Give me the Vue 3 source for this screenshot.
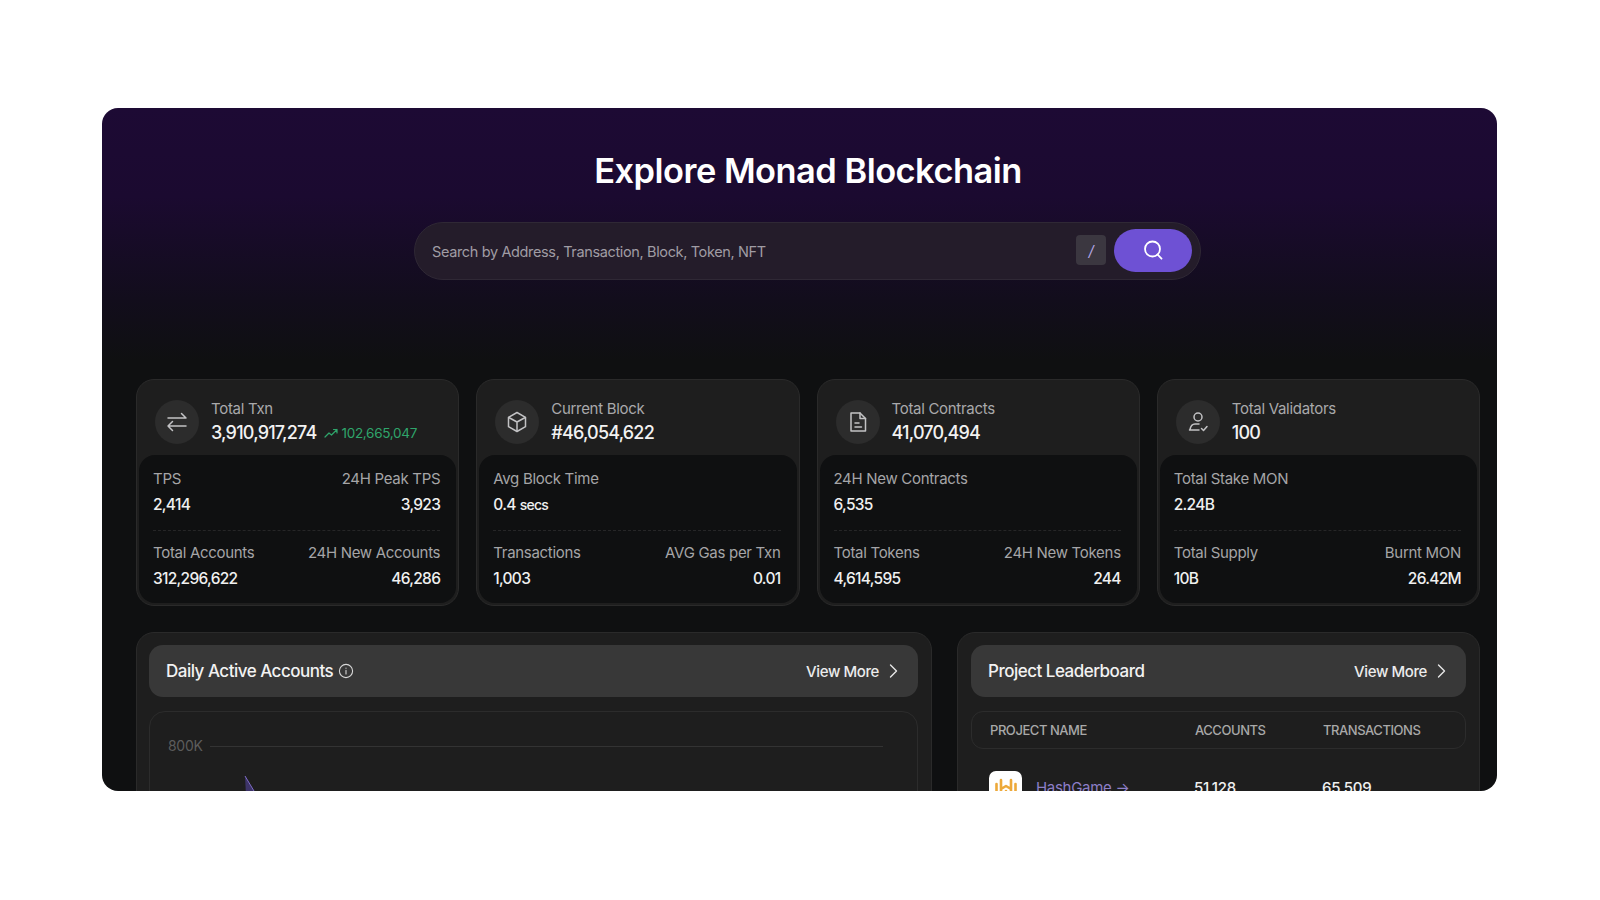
<template>
  <div class="page">
    <main class="explorer">
      <h1 class="title">Explore Monad Blockchain</h1>

      <div class="search">
        <span class="search__hint">Search by Address, Transaction, Block, Token, NFT</span>
        <span class="search__key">/</span>
        <button class="search__btn" type="button" aria-label="Search">
          <svg width="22" height="22" viewBox="0 0 22 22" fill="none" stroke="#fff" stroke-width="1.8" stroke-linecap="round">
            <circle cx="10.5" cy="10" r="7.5" />
            <path d="M15.5 15.5l4 4.2" />
          </svg>
        </button>
      </div>

      <section class="stats">
        <article v-for="card in cards" :key="card.title" class="stat-card">
          <header class="stat-card__head">
            <span class="stat-card__icon">
              <svg width="24" height="24" viewBox="0 0 24 24" fill="none" stroke="#c2c2c4" stroke-width="1.5" stroke-linecap="round" stroke-linejoin="round">
                <path v-for="d in card.icon" :key="d" :d="d" />
              </svg>
            </span>
            <div>
              <div class="stat-card__title">{{ card.title }}</div>
              <div class="stat-card__value">
                {{ card.value }}
                <span v-if="card.trend" class="trend">
                  <svg width="14" height="12" viewBox="0 0 14 12" fill="none" stroke="#2fa56b" stroke-width="1.2" stroke-linecap="round" stroke-linejoin="round">
                    <path d="M1 10l4-4 2.5 2L13 2.5M9.5 2.5H13V6" />
                  </svg>
                  {{ card.trend }}
                </span>
              </div>
            </div>
          </header>
          <div class="stat-card__body">
            <div v-for="(row, i) in card.rows" :key="i" class="metric-row">
              <div v-for="m in row" :key="m.label" class="metric">
                <div class="metric__label">{{ m.label }}</div>
                <div class="metric__value">{{ m.value }}<small v-if="m.unit">{{ m.unit }}</small></div>
              </div>
            </div>
          </div>
        </article>
      </section>

      <section class="lower">
        <article class="panel">
          <header class="panel__head">
            <h2 class="panel__title">
              Daily Active Accounts
              <svg width="16" height="16" viewBox="0 0 16 16" fill="none" stroke="#d8d8d8" stroke-width="1.1" stroke-linecap="round">
                <circle cx="8" cy="8" r="6.6" />
                <path d="M8 7.4v3.6M8 5v.2" />
              </svg>
            </h2>
            <a class="more">View More
              <svg width="16" height="16" viewBox="0 0 16 16" fill="none" stroke="#e6e6e6" stroke-width="1.4" stroke-linecap="round" stroke-linejoin="round"><path d="M5.5 2l6 6-6 6" /></svg>
            </a>
          </header>
          <div class="chart">
            <div class="chart__row">
              <span class="chart__tick">800K</span>
              <span class="chart__line"></span>
            </div>
            <svg class="chart__spike" width="14" height="20" viewBox="0 0 14 20">
              <path d="M1 0L13 20H2z" fill="#3d3468" />
              <path d="M1 0L13 20" stroke="#7d6cc4" stroke-width="1" fill="none" />
            </svg>
          </div>
        </article>

        <article class="panel">
          <header class="panel__head">
            <h2 class="panel__title">Project Leaderboard</h2>
            <a class="more">View More
              <svg width="16" height="16" viewBox="0 0 16 16" fill="none" stroke="#e6e6e6" stroke-width="1.4" stroke-linecap="round" stroke-linejoin="round"><path d="M5.5 2l6 6-6 6" /></svg>
            </a>
          </header>
          <div class="board board__head">
            <span>PROJECT NAME</span>
            <span>ACCOUNTS</span>
            <span>TRANSACTIONS</span>
          </div>
          <div class="board board__row">
            <span class="project">
              <span class="project__logo">
                <svg width="26" height="26" viewBox="0 0 26 26" fill="none" stroke="#eda93a" stroke-width="2.6" stroke-linecap="round" stroke-linejoin="round">
                  <path d="M3.5 9v11M8 5v17M18 5v17M22.5 9v11M8 14l5-3 5 3M13 16v6" />
                </svg>
              </span>
              <span class="project__name">HashGame →</span>
            </span>
            <span>51,128</span>
            <span>65,509</span>
          </div>
        </article>
      </section>
    </main>
  </div>
</template>

<script setup>
const cards = [
  {
    title: 'Total Txn',
    value: '3,910,917,274',
    trend: '102,665,047',
    icon: ['M3 8h18M16.5 3.5L21 8M3 16h18M7.5 11.5L3 16l4.5 4.5'],
    rows: [
      [{ label: 'TPS', value: '2,414' }, { label: '24H Peak TPS', value: '3,923' }],
      [{ label: 'Total Accounts', value: '312,296,622' }, { label: '24H New Accounts', value: '46,286' }],
    ],
  },
  {
    title: 'Current Block',
    value: '#46,054,622',
    icon: ['M12 2.5l8.5 4.8v9.4L12 21.5l-8.5-4.8V7.3z', 'M3.8 7.5L12 12l8.2-4.5M12 12v9.3'],
    rows: [
      [{ label: 'Avg Block Time', value: '0.4', unit: 'secs' }],
      [{ label: 'Transactions', value: '1,003' }, { label: 'AVG Gas per Txn', value: '0.01' }],
    ],
  },
  {
    title: 'Total Contracts',
    value: '41,070,494',
    icon: ['M5 3h9l5.5 5.5V21H5z', 'M14 3v5.5h5.5M9 13h4M9 17h6.5'],
    rows: [
      [{ label: '24H New Contracts', value: '6,535' }],
      [{ label: 'Total Tokens', value: '4,614,595' }, { label: '24H New Tokens', value: '244' }],
    ],
  },
  {
    title: 'Total Validators',
    value: '100',
    icon: ['M12 3a4 4 0 1 1 0 8 4 4 0 0 1 0-8z', 'M13 14H9c-2.5 0-4.3 1.7-5 5.5L3.5 20H13M15.5 18.5l2 2 3.5-4'],
    rows: [
      [{ label: 'Total Stake MON', value: '2.24B' }],
      [{ label: 'Total Supply', value: '10B' }, { label: 'Burnt MON', value: '26.42M' }],
    ],
  },
];
</script>

<style>
html,
body {
  background: #fff;
}
</style>

<style scoped>
.page {
  height: 900px;
  box-sizing: border-box;
  padding: 108px 103px 0 102px;
  overflow: hidden;
  font-family: Inter, "Liberation Sans", sans-serif;
  letter-spacing: -0.3px;
}

.explorer {
  height: 683px;
  box-sizing: border-box;
  padding: 42px 17px 0 34px;
  border-radius: 16px;
  overflow: hidden;
  background: linear-gradient(180deg, #1d0a34 0%, #1b0a30 13%, #120d1c 28%, #0f1011 37%, #0f1011 100%);
}

.title {
  margin: 0;
  font-size: 34.4px;
  line-height: 42px;
  font-weight: 600;
  text-align: center;
  color: #fff;
  letter-spacing: -0.5px;
}

.search {
  width: 787px;
  height: 58px;
  box-sizing: border-box;
  margin: 30px 0 0 278px;
  padding: 0 8px 0 17px;
  display: flex;
  align-items: center;
  border-radius: 29px;
  background: #241c2a;
  border: 1px solid #2f2835;
}

.search__hint {
  flex: 1;
  font-size: 14.5px;
  letter-spacing: -0.36px;
  color: #a09ca4;
}

.search__key {
  width: 30px;
  height: 30px;
  margin: -2px 8px 0 0;
  display: flex;
  align-items: center;
  justify-content: center;
  border-radius: 4px;
  background: #3b3740;
  color: #b3a6e4;
  font-size: 15px;
  font-style: italic;
}

.search__btn {
  width: 78px;
  height: 43px;
  margin-top: -2px;
  padding: 0;
  display: flex;
  align-items: center;
  justify-content: center;
  border: 0;
  border-radius: 22px;
  background: #6e51d4;
}

.stats {
  margin-top: 99px;
  display: grid;
  grid-template-columns: repeat(4, 1fr);
  gap: 17px;
}

.stat-card {
  height: 227px;
  box-sizing: border-box;
  padding: 0 2px 2px;
  border: 1px solid #2a2a2a;
  border-radius: 18px;
  background: #1e1e1e;
}

.stat-card__head {
  height: 75px;
  padding: 9px 16px 0;
  display: flex;
  align-items: center;
  gap: 12px;
  box-sizing: border-box;
}

.stat-card__icon {
  width: 44px;
  height: 44px;
  flex: none;
  display: flex;
  align-items: center;
  justify-content: center;
  border-radius: 50%;
  background: #2c2c2c;
}

.stat-card__title {
  font-size: 15px;
  line-height: 20px;
  color: #a9a9ab;
}

.stat-card__value {
  margin-top: 2px;
  font-size: 18px;
  line-height: 24px;
  font-weight: 500;
  letter-spacing: -0.8px;
  color: #f2f2f2;
  display: flex;
  align-items: center;
  gap: 8px;
}

.trend {
  display: inline-flex;
  align-items: center;
  gap: 3px;
  font-size: 13.5px;
  font-weight: 400;
  letter-spacing: -0.3px;
  color: #2fa56b;
}

.stat-card__body {
  height: 148px;
  box-sizing: border-box;
  padding: 15px 16px 0 14px;
  border-radius: 16px;
  background: #0f1011;
}

.metric-row {
  display: flex;
  justify-content: space-between;
}

.metric-row:first-child {
  padding-bottom: 16px;
  margin-bottom: 13px;
  border-bottom: 1px dashed #262627;
}

.metric:nth-child(2) {
  text-align: right;
}

.metric__label {
  font-size: 15px;
  line-height: 18px;
  color: #a5a5a7;
}

.metric__value {
  margin-top: 8px;
  font-size: 15.5px;
  line-height: 18px;
  font-weight: 500;
  letter-spacing: -0.7px;
  color: #f0f0f0;
}

.metric__value small {
  margin-left: 4px;
  font-size: 14px;
}

.lower {
  margin-top: 26px;
  display: grid;
  grid-template-columns: 796px 1fr;
  gap: 25px;
}

.panel {
  height: 300px;
  box-sizing: border-box;
  padding: 12px 13px 12px 12px;
  border: 1px solid #2a2a2a;
  border-radius: 18px;
  background: #1e1e1e;
}

.panel + .panel {
  padding-left: 13px;
}

.panel__head {
  height: 52px;
  padding: 0 17px;
  display: flex;
  align-items: center;
  justify-content: space-between;
  border-radius: 14px;
  background: #383838;
}

.panel__title {
  margin: 0;
  display: flex;
  align-items: center;
  gap: 5px;
  font-size: 17px;
  font-weight: 500;
  letter-spacing: -0.5px;
  color: #f2f2f2;
}

.more {
  display: flex;
  align-items: center;
  gap: 6px;
  font-size: 15px;
  font-weight: 500;
  letter-spacing: -0.4px;
  color: #ececec;
}

.chart {
  position: relative;
  height: 200px;
  margin-top: 14px;
  padding: 24px 34px 0 18px;
  border: 1px solid #2c2c2c;
  border-radius: 16px;
}

.chart__row {
  display: flex;
  align-items: center;
  gap: 7px;
}

.chart__tick {
  font-size: 14px;
  line-height: 20px;
  color: #5c5c5c;
}

.chart__line {
  flex: 1;
  height: 1px;
  background: #333;
}

.chart__spike {
  position: absolute;
  left: 94px;
  top: 64px;
}

.board {
  display: grid;
  grid-template-columns: 205px 128px 1fr;
  align-items: center;
  padding: 0 18px;
}

.board__head {
  height: 38px;
  box-sizing: border-box;
  margin-top: 14px;
  border: 1px solid #2c2c2c;
  border-radius: 12px;
  font-size: 13px;
  font-weight: 500;
  letter-spacing: -0.45px;
  color: #a9a9a9;
}

.board__row {
  height: 33px;
  margin-top: 22px;
  font-size: 15px;
  font-weight: 500;
  color: #f0f0f0;
}

.project {
  display: flex;
  align-items: center;
  gap: 14px;
}

.project__logo {
  width: 33px;
  height: 33px;
  display: flex;
  align-items: center;
  justify-content: center;
  border-radius: 7px;
  background: #fff;
}

.project__name {
  font-weight: 400;
  color: #8d7fc8;
}
</style>
